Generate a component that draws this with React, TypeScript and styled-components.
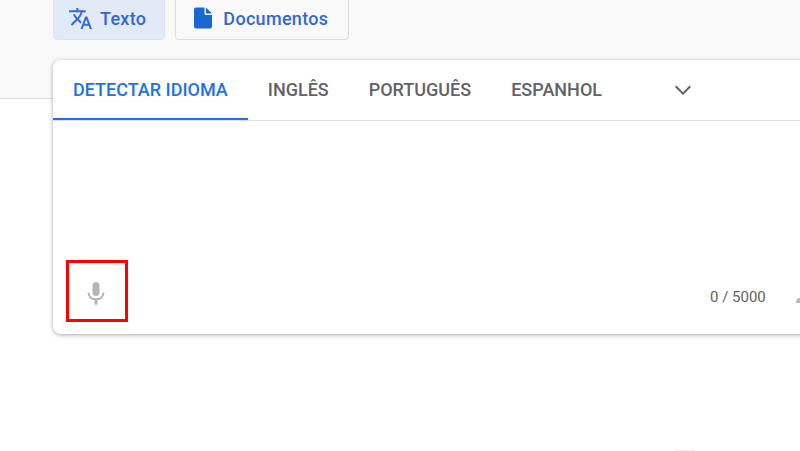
import { FC } from 'react';
import styled, { createGlobalStyle } from 'styled-components';

const TABS = ['Detectar idioma', 'Inglês', 'Português', 'Espanhol'];

const GlobalStyle = createGlobalStyle`
  html, body {
    margin: 0;
    height: 100%;
    background: #fff;
    font-family: Roboto, "Liberation Sans", sans-serif;
  }
`;

const TextIcon = () => (
  <svg width="25" height="25" viewBox="0 0 24 24" fill="currentColor">
    <path d="M12.87 15.07l-2.54-2.51.03-.03A17.52 17.52 0 0014.07 6H17V4h-7V2H8v2H1v1.99h11.17C11.5 7.92 10.44 9.75 9 11.35 8.07 10.32 7.3 9.19 6.69 8h-2c.73 1.63 1.73 3.17 2.98 4.56l-5.09 5.02L4 19l5-5 3.11 3.11.76-2.04zM18.5 10h-2L12 22h2l1.12-3h4.75L21 22h2l-4.5-12zm-2.62 7l1.62-4.33L19.12 17h-3.24z" />
  </svg>
);

const DocIcon = () => (
  <svg width="24" height="24" viewBox="0 0 24 24" fill="#1967d2">
    <path d="M5 1.5h8.5v6a1.5 1.5 0 001.5 1.5h6v11.5a2 2 0 01-2 2H5a2 2 0 01-2-2v-17a2 2 0 012-2z" />
    <path d="M15 1.5l6 6h-6z" />
  </svg>
);

const Chevron = () => (
  <svg width="24" height="24" viewBox="0 0 24 24" fill="#5f6368">
    <path d="M5.4 7.6L4 9l8 8 8-8-1.4-1.4-6.6 6.6z" />
  </svg>
);

const MicIcon = () => (
  <svg width="28" height="28" viewBox="0 0 24 24" fill="#b4b4b4">
    <path d="M12 14.5c1.66 0 3-1.34 3-3v-6c0-1.66-1.34-3-3-3s-3 1.34-3 3v6c0 1.66 1.34 3 3 3z" />
    <path d="M17.6 11.5c0 3-2.54 5.1-5.6 5.1s-5.6-2.1-5.6-5.1H4.7c0 3.41 2.72 6.23 6 6.72V22h2.6v-3.78c3.28-.49 6-3.31 6-6.72h-1.7z" />
  </svg>
);

const App: FC = () => (
  <Page>
    <GlobalStyle />
    <Band>
      <ModeRow>
        <ModeButton $active>
          <TextIcon />
          Texto
        </ModeButton>
        <ModeButton>
          <DocIcon />
          Documentos
        </ModeButton>
      </ModeRow>
      <Card>
        <TabBar>
          {TABS.map((tab, i) => (
            <Tab key={tab} $active={i === 0}>
              {tab}
            </Tab>
          ))}
          <ChevronSlot>
            <Chevron />
          </ChevronSlot>
        </TabBar>
        <InputArea />
        <CardFooter>
          <MicButton>
            <MicIcon />
          </MicButton>
          <Counter>0 / 5000</Counter>
          <EdgeDot />
        </CardFooter>
      </Card>
    </Band>
    <BottomSmudge />
  </Page>
);

export default App;

const Page = styled.div`
  position: relative;
  width: 800px;
  height: 451px;
  overflow: hidden;
`;

const Band = styled.div`
  height: 98px;
  padding-left: 53px;
  background: #f9f9f9;
  border-bottom: 1px solid #dadce0;
`;

const ModeRow = styled.div`
  display: flex;
  gap: 10px;
  height: 60px;
`;

const ModeButton = styled.div<{ $active?: boolean }>`
  display: flex;
  align-items: center;
  gap: ${(p) => (p.$active ? 7 : 8)}px;
  height: 44px;
  margin-top: -4px;
  padding: 0 ${(p) => (p.$active ? '18px 0 14px' : '20px 0 15px')};
  box-sizing: border-box;
  border: 1px solid ${(p) => (p.$active ? '#d2e3fc' : '#dadce0')};
  border-radius: 4px;
  background: ${(p) => (p.$active ? '#e2eaf8' : '#f9f9f9')};
  color: #3367d6;
  font-size: 18px;
  font-weight: 500;
  letter-spacing: 0.3px;
`;

const Card = styled.div`
  width: 800px;
  height: 274px;
  display: flex;
  flex-direction: column;
  background: #fff;
  border-radius: 8px;
  box-shadow: 0 1px 4px 0 rgba(60, 64, 67, 0.45);
`;

const TabBar = styled.div`
  display: flex;
  height: 61px;
  box-sizing: border-box;
  border-bottom: 1px solid #e0e0e0;
  flex-shrink: 0;
`;

const Tab = styled.div<{ $active: boolean }>`
  display: flex;
  align-items: center;
  height: 60px;
  padding: 0 20px;
  box-sizing: border-box;
  text-transform: uppercase;
  font-size: 18px;
  font-weight: 500;
  color: ${(p) => (p.$active ? '#1a73e8' : '#5f6368')};
  border-bottom: 2px solid ${(p) => (p.$active ? '#1a73e8' : 'transparent')};
`;

const ChevronSlot = styled.div`
  display: flex;
  align-items: center;
  margin-left: 49px;
  height: 60px;
`;

const InputArea = styled.div`
  flex-grow: 1;
`;

const CardFooter = styled.div`
  display: flex;
  align-items: center;
  height: 74px;
  padding-left: 13px;
  flex-shrink: 0;
  position: relative;
`;

const MicButton = styled.div`
  width: 62px;
  height: 62px;
  box-sizing: border-box;
  border: 3px solid #ff0000;
  display: flex;
  align-items: center;
  justify-content: center;
  margin-bottom: 12px;
  padding: 3px 2px 0 0;
`;

const Counter = styled.div`
  margin-left: 582px;
  font-size: 15px;
  color: #5f6368;
`;

const EdgeDot = styled.div`
  position: absolute;
  right: 53px;
  top: 38px;
  width: 4px;
  height: 5px;
  background: #b8b8b8;
  border-radius: 4px 0 0 0;
`;

const BottomSmudge = styled.div`
  position: absolute;
  left: 675px;
  bottom: 0;
  width: 20px;
  height: 1px;
  background: #ececec;
`;
